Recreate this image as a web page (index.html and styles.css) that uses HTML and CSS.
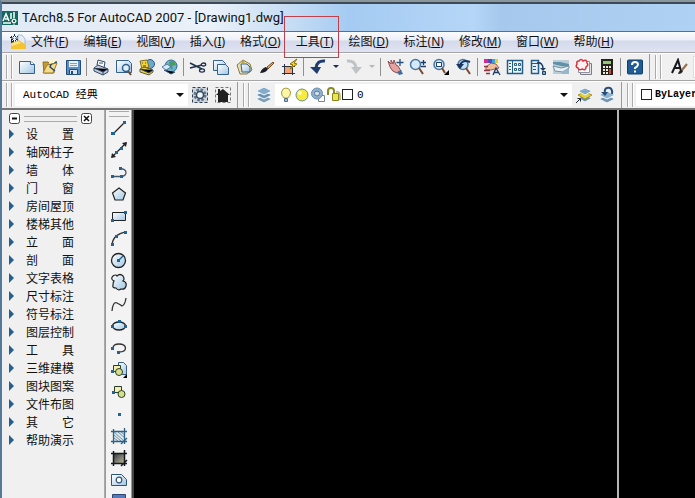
FILE: index.html
```html
<!DOCTYPE html>
<html lang="zh">
<head>
    <meta charset="UTF-8" />
    <title>TArch8.5 For AutoCAD 2007</title>
    <link rel="stylesheet" href="styles.css">
</head>
<body>
    <svg class="defs" width="0" height="0">
        <defs>
            <linearGradient id="paper" x1="0" y1="0" x2="1" y2="1">
                <stop offset="0" stop-color="#fff"/><stop offset="1" stop-color="#9fc6e4"/>
            </linearGradient>
            <linearGradient id="fade" x1="0" y1="0" x2="1" y2="1">
                <stop offset="0" stop-color="#2a3040"/><stop offset="1" stop-color="#c8c49a"/>
            </linearGradient>
        </defs>
    </svg>

    <header class="titlebar">
        <svg class="logo" viewBox="0 0 16 16"><path fill="#12685f" d="M0 1h16v14H0z"/><path fill="none" stroke="#fff" stroke-width="1.5" d="M1 11 4 4l3 7M3 9h3M9 3v6M1 13h8M12 2v6"/><path fill="none" stroke="#cfeee8" d="M9 11h6M12 8v7"/><path fill="#12685f" stroke="#fff" d="M10.5 9.5h3v3h-3z"/></svg>
        <span>TArch8.5 For AutoCAD 2007 - [Drawing1.dwg]</span>
    </header>

    <nav class="menubar">
        <svg class="doc" viewBox="0 0 16 16"><path fill="#172c55" d="M1 2h8v13H1z"/><path fill="#e4edf6" stroke="#8397b0" stroke-width=".6" d="M8 1h4l3 4v6L8 7z"/><path fill="#f3c430" d="M1 9l8-3 7 5v4H1z"/><path fill="#fbe58b" d="M1 10l7-3 3 2-9 3z"/><path stroke="#e8f3ff" d="M1 4h7M4.5 0v8M2 2l5 5M7 2 2 7"/><path stroke="#172c55" d="M0 3.5h2M4.500 0v2"/></svg>
        <a href="#">文件(<u>F</u>)</a>
        <a href="#">编辑(<u>E</u>)</a>
        <a href="#">视图(<u>V</u>)</a>
        <a href="#">插入(<u>I</u>)</a>
        <a href="#">格式(<u>O</u>)</a>
        <a href="#" class="marked">工具(<u>T</u>)</a>
        <a href="#">绘图(<u>D</u>)</a>
        <a href="#">标注(<u>N</u>)</a>
        <a href="#">修改(<u>M</u>)</a>
        <a href="#">窗口(<u>W</u>)</a>
        <a href="#">帮助(<u>H</u>)</a>
    </nav>

    <div class="toolbar">
        <div class="grip"></div>
        <button title="新建"><svg viewBox="0 0 18 18"><path fill="url(#paper)" stroke="#35608c" d="M1.500 3.500h11l4 3v9h-15z"/><path fill="#fff" stroke="#35608c" d="M12.500 3.500v3h4"/></svg></button>
        <button title="打开"><svg viewBox="0 0 18 18"><path fill="#c59a35" stroke="#94701f" d="M2 4h5l2 2h4v9H3z"/><path fill="#f6dc86" stroke="#9b7a2c" d="M2 15 6 7l10-2-4 10z"/><path fill="none" stroke="#23496f" stroke-width="1.500" d="M16 4q-6 0-7 5l5 4"/><path fill="#fff5c4" d="M9 2l7-1-3 4-5 1z"/></svg></button>
        <button title="保存"><svg viewBox="0 0 18 18"><path fill="#5a8fc2" stroke="#214c7c" d="M2.500 2.500h14v14h-14z"/><path fill="#eaf3fb" d="M5 3h9v6H5z"/><path stroke="#7ca3c6" d="M6 5.500h7M6 7.500h7"/><path fill="#d8e3ec" stroke="#214c7c" d="M5.500 11.500h8v5h-8z"/><path fill="#214c7c" d="M7 13h2v3H7z"/></svg></button>
        <span class="sep"></span>
        <button title="打印"><svg viewBox="0 0 18 18"><path fill="#fff" stroke="#33486a" d="M6 2l7 2-1 6-7-3z"/><path fill="#bccbdc" stroke="#33486a" d="M2 10l4-3 10 4v3l-5 3-9-4z"/><path stroke="#33486a" d="M2 10l9 4 5-3M11 14v3M7 5h4"/></svg></button>
        <button title="打印预览"><svg viewBox="0 0 18 18"><path fill="url(#paper)" stroke="#35608c" d="M1.500 2.500h12l3 3v9h-15z"/><circle cx="11" cy="10" r="3.500" fill="#dff0fa" stroke="#33618e" stroke-width="1.500"/><path stroke="#6d4a35" stroke-width="2" d="M13 13l3 4"/></svg></button>
        <button title="发布"><svg viewBox="0 0 18 18"><circle cx="12" cy="6" r="4.500" fill="#69a9d0" stroke="#2c5a86"/><path fill="#f1d33b" stroke="#836b16" d="M2 3l7-1 2 7-7 2z"/><path fill="#f1d33b" stroke="#5f5a3a" d="M2 11l4-2 9 3v2l-4 3-9-3z"/><path stroke="#33486a" d="M4 5h1M7 5h1M5 8h3M2 11l9 4 4-3"/></svg></button>
        <button title="三维 DWF"><svg viewBox="0 0 18 18"><circle cx="10" cy="8" r="6" fill="#6fb2d4" stroke="#2f6895"/><path fill="#4c9a5e" d="M8 4q5-3 7 3l-4 1 1 4-3-2z"/><path fill="#d7e9f6" stroke="#4a7ca8" d="M1 9l5-3 4 3-5 3z"/><path stroke="#2c4f78" d="M3 12l7 4 4-2"/></svg></button>
        <span class="sep"></span>
        <button title="剪切"><svg viewBox="0 0 18 18"><path fill="none" stroke="#1d2f4c" stroke-width="1.500" d="M1 5l12 6M1 10l12-3"/><ellipse cx="14.500" cy="6.500" rx="2.200" ry="1.500" fill="none" stroke="#1d2f4c" stroke-width="1.300"/><ellipse cx="13" cy="12.500" rx="2.500" ry="1.600" fill="none" stroke="#1d2f4c" stroke-width="1.300"/></svg></button>
        <button title="复制"><svg viewBox="0 0 18 18"><path fill="url(#paper)" stroke="#35608c" d="M1.500 2.500h9l3 3v7h-12z"/><path fill="url(#paper)" stroke="#35608c" d="M5.500 6.500h8l3 3v7h-11z"/></svg></button>
        <button title="粘贴"><svg viewBox="0 0 18 18"><path fill="#e9dfb4" stroke="#8a7a3a" d="M2 7l6-5 7 4 2 6-5 4H5z"/><path fill="url(#paper)" stroke="#35608c" d="M6 6h6l3 3v5H7z"/><circle cx="8" cy="4" r="1.500" fill="#c2a23c"/></svg></button>
        <button title="特性匹配"><svg viewBox="0 0 18 18"><path fill="#dba763" stroke="#7c4a1f" d="M9 9l6-5 1 1-6 6z"/><path fill="#1d1d26" d="M2 15q2-5 6-6l2 2q-2 4-8 4z"/></svg></button>
        <button title="块编辑器"><svg viewBox="0 0 18 18"><path fill="#f3a275" stroke="#93401f" d="M3.500 8.500h8v7h-8z"/><path stroke="#29333f" d="M1 8.500h13M1 15.500h13M3.500 6v11M11.500 6v11"/><path fill="#f9d72c" stroke="#8a6c00" d="M16 1 9 6l3 1-3 4 7-5-3-1z"/></svg></button>
        <span class="sep"></span>
        <button title="放弃"><svg viewBox="0 0 18 18"><path fill="none" stroke="#1e3c6c" stroke-width="3" d="M16 3q-8-1-9 7"/><path fill="#1e3c6c" d="M1 9h11l-4 7z"/></svg></button>
        <button class="drop" title="放弃列表"><svg viewBox="0 0 9 18"><path fill="#1e2c50" d="M2 7h6L5 10z"/></svg></button>
        <button title="重做"><svg viewBox="0 0 18 18"><path fill="none" stroke="#bfc3c6" stroke-width="3" d="M2 3q8-1 9 7"/><path fill="#bfc3c6" d="M6 9h11l-6 7z"/></svg></button>
        <button class="drop" title="重做列表"><svg viewBox="0 0 9 18"><path fill="#b4b8bc" d="M2 7h6L5 10z"/></svg></button>
        <span class="sep"></span>
        <button title="实时平移"><svg viewBox="0 0 18 18"><path fill="#e3a3a0" stroke="#8f4f55" d="M2 3l3 3 0-4 2 4 1-4 2 5 2 1 3 5-4 2q-5-1-7-6z"/><path fill="#3d70a1" d="M11 14l4-2 2 4-4 1z"/><path fill="none" stroke="#26527f" stroke-width="1.300" d="M14 1v7M10.500 4.500h7"/></svg></button>
        <button title="实时缩放"><svg viewBox="0 0 18 18"><circle cx="6.500" cy="6.500" r="5" fill="#d5eaf8" stroke="#4779a6" stroke-width="1.500"/><path stroke="#754a34" stroke-width="2" d="M10 10l4 6"/><path stroke="#1b3d68" stroke-width="1.300" d="M14.500 2v5M12 4.500h5M12 8.500h5"/></svg></button>
        <button title="窗口缩放"><svg viewBox="0 0 18 18"><circle cx="7" cy="6.500" r="5" fill="#d5eaf8" stroke="#4779a6" stroke-width="1.500"/><path fill="#fff" stroke="#1b3d68" d="M4.500 4.500h5v4h-5z"/><path stroke="#754a34" stroke-width="2" d="M10 10l3 5"/><path d="M17 12v5h-5z"/></svg></button>
        <button title="缩放上一个"><svg viewBox="0 0 18 18"><circle cx="8" cy="6.500" r="5" fill="#c7e0f3" stroke="#4779a6" stroke-width="1.500"/><path stroke="#754a34" stroke-width="2" d="M11 10l4 6"/><path fill="none" stroke="#18355f" stroke-width="2" d="M15 4Q8 1 5 7"/><path fill="#18355f" d="M1 6h8l-4 5z"/></svg></button>
        <span class="sep"></span>
        <button title="特性"><svg viewBox="0 0 18 18"><path fill="#d72a8c" d="M1 1h4v4H1z"/><path fill="#5245c5" d="M5 1h4v4H5z"/><path fill="#36a7dc" d="M9 1h3v4H9z"/><path fill="#e3d21e" d="M12 1h3v4h-3z"/><path fill="#f0bd9c" stroke="#9a5a54" d="M3 9l5-4 5 1 3 4-4 1-4 1-5 0z"/><path stroke="#893346" stroke-width="1.500" d="M1 8.500h4M1 12.500h6M3 15.500h4"/><path fill="none" stroke="#1f3b68" stroke-width="1.300" d="M10 17l3-7 4 7M11.500 14.500h4"/></svg></button>
        <button title="设计中心"><svg viewBox="0 0 18 18"><path fill="#eff7fb" stroke="#215d84" stroke-width="1.500" d="M1.500 2.500h15v13h-15z"/><path stroke="#215d84" d="M6.500 3v12M3 5.500h2M3 8.500h2M3 11.500h2"/><path fill="none" stroke="#215d84" d="M8.500 5.500h2v2h-2zM12.500 5.500h2v2h-2zM8.500 10.500h2v2h-2zM12.500 10.500h2v2h-2z"/></svg></button>
        <button title="工具选项板"><svg viewBox="0 0 18 18"><path fill="#e5f1f8" stroke="#215d84" stroke-width="1.500" d="M2.500 2.500h7v13h-7z"/><path stroke="#215d84" d="M3 5.500h6M4 8.500h3M4 11.500h3"/><path fill="none" stroke="#1e3e68" stroke-width="1.500" d="M8 5q6-1 6 6"/><path fill="#1e3e68" d="M11 10h6l-3 3z"/><path fill="#7da9c7" stroke="#1e3e68" d="M13.500 13.500h3v3h-3z"/></svg></button>
        <button title="图纸集管理器"><svg viewBox="0 0 18 18"><path fill="#bdcdd7" d="M1 2h16v14H1z"/><path fill="#5f91aa" d="M1 4h7l9 2v3L9 8 1 6z"/><path fill="#e8f1f6" stroke="#7391a6" d="M1 8l8 2 8-2v2l-6 4-8-1z"/><path fill="#96b7c9" d="M12 12l5-1v5H9z"/></svg></button>
        <button title="标记集管理器"><svg viewBox="0 0 18 18"><path fill="#e6e5e6" stroke="#7a7d89" d="M5.500 5.500h11v11h-11z"/><path fill="#fff" stroke="#8e919d" d="M3.500 3.500h11v11h-11z"/><path fill="#fff1f0" stroke="#d53440" stroke-width="1.500" d="M4 3q2-3 4 0 4-2 4 2 2 2-1 4 0 4-4 2-3 2-4-1-3-1-1-4-1-3 2-3z"/></svg></button>
        <button title="快速计算器"><svg viewBox="0 0 18 18"><path fill="#26231d" d="M3 1h12v16H3z"/><path fill="#8fca70" d="M5 3h8v3H5z"/><path fill="#f0ece1" d="M5 8h2v2H5zM8 8h2v2H8zM11 8h2v2h-2zM5 11h2v2H5zM8 11h2v2H8zM5 14h2v2H5zM8 14h2v2H8z"/><path fill="#d64a33" d="M11 11h2v5h-2z"/></svg></button>
        <span class="sep"></span>
        <button title="帮助"><svg viewBox="0 0 18 18"><rect x="1.500" y="2" width="15" height="14" rx="1" fill="#205d94" stroke="#123e6c"/><path fill="none" stroke="#fff" stroke-width="2" d="M6 7q0-3 3-3t3 2.500q0 1.500-3 3.500v1M9 12.500v2"/></svg></button>
        <span class="toolbar-end"></span>
        <div class="grip"></div>
        <button class="style-btn" title="文字样式"><svg viewBox="0 0 18 18"><path fill="none" stroke="#16181d" stroke-width="2" d="M2 15 8 2l3 11M4 10h6"/><path stroke="#9a6a46" stroke-width="2" d="M17 6l-5 6"/><path fill="#222" d="M8 16q1-4 4-4l1 1q-1 3-5 3z"/></svg></button>
        <input class="style-name" type="text" aria-label="文字样式" value="Standard">
    </div>

    <div class="toolbar">
        <div class="grip"></div>
        <div class="combo workspace">
            <select aria-label="工作空间"><option>AutoCAD 经典</option></select>
        </div>
        <button title="工作空间设置"><svg viewBox="0 0 18 18"><path fill="#cdd6df" stroke="#35404c" stroke-dasharray="3 2" d="M1.500 1.500h15v15h-15z"/><circle cx="9" cy="9" r="5" fill="none" stroke="#5d7387" stroke-width="3" stroke-dasharray="2.500 1.400"/><circle cx="9" cy="9" r="3.500" fill="#f2f6f8" stroke="#33485d" stroke-width="1.500"/></svg></button>
        <button title="我的工作空间"><svg viewBox="0 0 18 18"><path fill="none" stroke="#777" stroke-dasharray="3 2" d="M1.500 1.500h15v15h-15z"/><path fill="#202020" d="M4 3h2v2l3-2 7 6h-2v7H4V9H2l2-2z"/></svg></button>
        <span class="toolbar-end"></span>
        <div class="grip"></div>
        <button title="图层特性管理器"><svg viewBox="0 0 18 18"><path fill="#7e9eb8" stroke="#f5f8fa" d="M1 13l8-4 8 4-8 4z"/><path fill="#6b92b4" stroke="#f5f8fa" d="M1 9l8-4 8 4-8 4z"/><path fill="#83abcc" stroke="#f5f8fa" d="M1 5l8-4 8 4-8 4z"/></svg></button>
        <div class="combo layer">
            <svg viewBox="0 0 16 16"><path fill="#fdf6a7" stroke="#a69b3f" d="M6 11Q3 8 3.500 5q1-4 4.500-4t4.500 4q.5 3-2.500 6z"/><path fill="#a1b7ca" stroke="#55728d" d="M6.500 11.500h3v3h-3z"/></svg>
            <svg viewBox="0 0 16 16"><circle cx="8" cy="8" r="6" fill="#f5eb3c" stroke="#6c9096"/><circle cx="6" cy="6" r="2" fill="#fffbc0"/></svg>
            <svg viewBox="0 0 16 16"><path fill="#fff" stroke="#778795" d="M8.500 8.500h6v6h-6z"/><circle cx="7" cy="6.500" r="5.500" fill="#91b0ca" stroke="#6b8faf"/><circle cx="7" cy="6.500" r="2.500" fill="#d2e2ed" stroke="#54789a"/></svg>
            <svg viewBox="0 0 16 16"><path fill="none" stroke="#8c8a22" stroke-width="2" d="M2 8V4q0-3 3-3t3 3v3"/><path fill="#ece64e" stroke="#8a851f" d="M6.500 6.500h6v7h-6z"/><path fill="none" stroke="#8a851f" d="M10 5q4-1 4 3v5"/></svg>
            <i class="swatch"></i>
            <select aria-label="图层"><option>0</option></select>
        </div>
        <button title="将对象的图层置为当前"><svg viewBox="0 0 18 18"><path fill="#6f91ab" stroke="#f5f8fa" d="M3 12l7-3 7 3-7 4z"/><path fill="#e4d137" stroke="#a6962b" d="M3 9l7-3 7 3-7 4z"/><path fill="#82a9c5" stroke="#f5f8fa" d="M3 5l7-3 7 3-7 4z"/><path fill="none" stroke="#202936" d="M1 17l4-4M2.500 12.500h3v3"/></svg></button>
        <button title="上一个图层"><svg viewBox="0 0 18 18"><path fill="#7295b2" stroke="#f5f8fa" d="M1 13l8-4 8 4-8 4z"/><path fill="#91b3cf" stroke="#f5f8fa" d="M1 9l8-4 8 4-8 4z"/><path fill="none" stroke="#264f7b" stroke-width="2" d="M14 8Q15 1 9 2 6 3 7 7"/><path fill="#264f7b" d="M3 6h7l-3 4z"/></svg></button>
        <span class="toolbar-end"></span>
        <div class="grip"></div>
        <div class="combo color">
            <i class="swatch"></i>
            <select aria-label="颜色"><option>ByLayer</option></select>
        </div>
    </div>

    <main>
        <aside class="screen-menu">
            <div class="screen-head">
                <button title="折叠"><svg viewBox="0 0 11 11"><rect x=".5" y=".5" width="10" height="10" rx="2" fill="#fff" stroke="#444"/><path stroke="#111" stroke-width="2" d="M3 5.500h5"/></svg></button>
                <span class="bars"></span>
                <button title="关闭"><svg viewBox="0 0 11 11"><rect x=".5" y=".5" width="10" height="10" rx="2" fill="#fff" stroke="#444"/><path stroke="#111" stroke-width="1.500" d="M3 3l5 5M8 3 3 8"/></svg></button>
            </div>
            <ul>
                <li><a href="#">设　　置</a></li>
                <li><a href="#">轴网柱子</a></li>
                <li><a href="#">墙　　体</a></li>
                <li><a href="#">门　　窗</a></li>
                <li><a href="#">房间屋顶</a></li>
                <li><a href="#">楼梯其他</a></li>
                <li><a href="#">立　　面</a></li>
                <li><a href="#">剖　　面</a></li>
                <li><a href="#">文字表格</a></li>
                <li><a href="#">尺寸标注</a></li>
                <li><a href="#">符号标注</a></li>
                <li><a href="#">图层控制</a></li>
                <li><a href="#">工　　具</a></li>
                <li><a href="#">三维建模</a></li>
                <li><a href="#">图块图案</a></li>
                <li><a href="#">文件布图</a></li>
                <li><a href="#">其　　它</a></li>
                <li><a href="#">帮助演示</a></li>
            </ul>
        </aside>

        <div class="draw-bar">
            <div class="grip-h"></div>
            <button title="直线"><svg viewBox="0 0 18 18"><path stroke="#222" stroke-width="1.300" d="M3 15 15 3"/><path fill="#1e6596" d="M1 13h4v3H1zM13 2h3v3h-3z"/></svg></button>
            <button title="构造线"><svg viewBox="0 0 18 18"><path stroke="#222" stroke-width="1.300" d="M2 16 16 2"/><path fill="#222" d="M1 17l1-5 4 4zM17 1l-5 1 4 4z"/><path fill="#1e6596" d="M5 10h3v3H5zM10 6h3v3h-3z"/></svg></button>
            <button title="多段线"><svg viewBox="0 0 18 18"><path fill="none" stroke="#46576a" stroke-width="1.300" d="M2 13.500h10q4-1 4-4t-5-4"/><path fill="#1e6596" d="M1 12h3v3H1zM10 12h3v3h-3zM9 4h3v3H9z"/></svg></button>
            <button title="正多边形"><svg viewBox="0 0 18 18"><path fill="url(#paper)" stroke="#222" stroke-width="1.200" d="M9 3l6.500 5-2.500 7H5L2.500 8z"/></svg></button>
            <button title="矩形"><svg viewBox="0 0 18 18"><path fill="url(#paper)" stroke="#222" d="M2.500 5.500h13v8h-13z"/><path fill="#1e6596" d="M1 12h3v3H1zM14 4h3v3h-3z"/></svg></button>
            <button title="圆弧"><svg viewBox="0 0 18 18"><path fill="none" stroke="#333" stroke-width="1.300" d="M2 16Q3 5 16 3"/><path fill="#1e6596" d="M1 14h3v3H1zM5 6h3v3H5zM14 2h3v3h-3z"/></svg></button>
            <button title="圆"><svg viewBox="0 0 18 18"><circle cx="8.500" cy="9.500" r="7" fill="url(#paper)" stroke="#222" stroke-width="1.300"/><path stroke="#1e6596" stroke-width="1.500" d="M8 10l5-5"/><path fill="#1e6596" d="M7 8h3v3H7z"/></svg></button>
            <button title="修订云线"><svg viewBox="0 0 18 18"><path fill="url(#paper)" stroke="#222" stroke-width="1.200" d="M4 8Q0 6 3 3q3-2 4 0 3-3 6 0 2 3 0 5 4 1 3 5-1 4-5 3-3 2-5-1-4 0-3-3 0-3 1-4z"/></svg></button>
            <button title="样条曲线"><svg viewBox="0 0 18 18"><path fill="none" stroke="#333" stroke-width="1.300" d="M2 16Q3 6 7 8t5 3q3-1 4-8"/></svg></button>
            <button title="椭圆"><svg viewBox="0 0 18 18"><ellipse cx="9" cy="9" rx="6.500" ry="4" fill="url(#paper)" stroke="#222" stroke-width="1.300"/><path fill="#1e6596" d="M1 8h3v3H1zM14 8h3v3h-3zM8 3h3v3H8z"/></svg></button>
            <button title="椭圆弧"><svg viewBox="0 0 18 18"><path fill="none" stroke="#333" stroke-width="1.300" d="M3 9q0-4 6-4t6.500 4q0 4-6.500 4"/><path fill="#1e6596" d="M1 8h3v3H1zM7 12h3v3H7z"/></svg></button>
            <button title="插入块"><svg viewBox="0 0 18 18"><path fill="url(#paper)" stroke="#35608c" d="M8.500 1.500h5l3 3v9h-8z"/><path fill="#f2efb0" stroke="#2c3d26" d="M3.500 4.500h7v6h-7z"/><circle cx="9" cy="11" r="3.500" fill="#d6e08a" stroke="#2c3d26"/><path fill="#1e6596" d="M1 9h3v3H1z"/><path d="M17 13v4h-4z"/></svg></button>
            <button title="创建块"><svg viewBox="0 0 18 18"><path fill="#f2efb0" stroke="#2c3d26" d="M4.500 3.500h7v6h-7z"/><circle cx="11.500" cy="11" r="3.500" fill="#d6e08a" stroke="#2c3d26"/><path fill="#1e6596" d="M2 8h3v3H2z"/></svg></button>
            <button title="点"><svg viewBox="0 0 18 18"><path fill="#1e6596" d="M8 8h3v3H8z"/></svg></button>
            <button title="图案填充"><svg viewBox="0 0 18 18"><path fill="#dcebf2" d="M4 5h11v9H4z"/><path stroke="#5c7787" stroke-width=".8" d="M4 5l10 9M8 5l7 6M11 5l4 3M4 8l7 6M4 11l4 3"/><path stroke="#2c6286" stroke-width="1.300" d="M1 4.500h16M1 14.500h16M3.500 2v15M14.500 1v16M11 17l6-6"/></svg></button>
            <button title="渐变色"><svg viewBox="0 0 18 18"><path fill="url(#fade)" d="M3 4h12v11H3z"/><path stroke="#15191f" stroke-width="1.500" d="M1 4.500h16M1 14.500h16M3.500 2v15M14.500 1v16M11 17l6-6"/></svg></button>
            <button title="面域"><svg viewBox="0 0 18 18"><path fill="url(#paper)" stroke="#2f5579" d="M1.500 3.500h10l5 5v6h-15z"/><circle cx="9" cy="9" r="2.800" fill="#fff" stroke="#2f5579" stroke-width="1.200"/></svg></button>
            <button title="表格"><svg viewBox="0 0 18 18"><path fill="#5679b8" stroke="#2b4576" d="M2.500 1.500h13v15h-13z"/></svg></button>
        </div>

        <section class="canvas">
            <div class="viewport"></div>
            <div class="viewport side"></div>
        </section>
    </main>
</body>
</html>
```
FILE: styles.css
```css
* {
    box-sizing: border-box;
}
body {
    display: flex;
    flex-direction: column;
    height: 100vh;
    margin: 0;
    overflow: hidden;
    border-top: 2px solid #8b959c;
    border-left: 2px solid #55799b;
    background-color: #f0f0f0;
    color: #111;
    font-family: "Noto Sans", "Noto Sans CJK SC", sans-serif;
    font-size: 12px;
}
a {
    color: inherit;
    text-decoration: none;
}
button {
    display: flex;
    flex: none;
    align-items: center;
    justify-content: center;
    width: 23px;
    height: 22px;
    padding: 0;
    border: none;
    background: none;
}
button svg {
    width: 18px;
    height: 18px;
}
.defs {
    position: absolute;
}

/* title + menu */
.titlebar {
    display: flex;
    flex: none;
    align-items: center;
    gap: 4px;
    height: 30px;
    border-top: 2px solid #3c4a58;
    border-bottom: 1px solid #5d6f80;
    background: linear-gradient(90deg, #dfeaf5 0, #eaf1f9 30%, #c5dcf4 42%, #a5cbf2 50%, #b5d6f7 68%, #a5c8ec 72%, #aed1f4 100%);
    font-family: Roboto, sans-serif;
    font-size: 13px;
    white-space: nowrap;
}
.logo {
    width: 16px;
    height: 16px;
}
.menubar {
    display: flex;
    flex: none;
    align-items: center;
    gap: 15px;
    height: 20px;
    padding-left: 8px;
    background: linear-gradient(#fbfcfe 0, #eceff8 40%, #d5daeb 45%, #dfe3f2 100%);
    white-space: nowrap;
}
.menubar .doc {
    flex: none;
    width: 16px;
    height: 16px;
    margin-right: -10px;
}
.menubar a {
    line-height: 18px;
}
.marked {
    position: relative;
}
.marked::after {
    content: "";
    position: absolute;
    top: -17px;
    left: -12px;
    right: -5px;
    height: 40px;
    border: 1px solid #c0404c;
}

/* toolbars */
.toolbar {
    display: flex;
    flex: none;
    align-items: center;
    height: 28px;
    padding-left: 4px;
    overflow: hidden;
    border-top: 1px solid #a5a5a5;
    background-color: #f0f0f0;
    box-shadow: inset 0 1px #fff;
}
.grip {
    flex: none;
    width: 6px;
    height: 24px;
    margin-right: 3px;
    border: solid #aaa;
    border-width: 0 1px;
    box-shadow: 1px 0 #fff, inset 1px 0 #fff;
}
.sep {
    flex: none;
    width: 1px;
    height: 18px;
    margin: 0 2px;
    background-color: #8f8f8f;
}
.drop {
    width: 13px;
}
.drop svg {
    width: 9px;
}
.toolbar-end {
    flex: none;
    width: 1px;
    height: 26px;
    margin: 0 5px 0 3px;
    background-color: #999;
}
.style-btn {
    margin: 0 3px;
}
.style-name {
    width: 140px;
    height: 22px;
    border: 1px solid #ddd;
    background-color: #fff;
    font: 11px "Liberation Mono", monospace;
}
.combo {
    display: flex;
    flex: none;
    align-items: center;
    height: 22px;
    background-color: #fff;
}
.combo svg {
    width: 16px;
    height: 16px;
}
.combo select {
    flex: 1;
    min-width: 0;
    height: 22px;
    padding: 0 0 0 4px;
    border: none;
    appearance: none;
    background: none;
    color: #000;
    font: 11px "Liberation Mono", "Noto Sans CJK SC", monospace;
}
.combo::after {
    content: "";
    margin-right: 4px;
    border: 4px solid transparent;
    border-top-color: #111;
    border-bottom: none;
}
.workspace {
    width: 173px;
    padding-left: 4px;
}
.layer {
    width: 297px;
    padding-left: 3px;
}
.color {
    width: 180px;
    padding-left: 5px;
}
.combo.color select {
    padding-left: 3px;
    font-size: 10px;
    font-weight: bold;
}
.swatch {
    width: 11px;
    height: 11px;
    border: 1px solid #222;
}

/* work area */
main {
    display: flex;
    flex: 1;
    min-height: 0;
    border-top: 2px solid #777;
}
.screen-menu {
    flex: none;
    width: 103px;
    padding: 3px 0 0 7px;
    border-right: 1px solid #aaa;
    background-color: #f0f0f0;
}
.screen-head {
    display: flex;
    align-items: center;
    gap: 4px;
    width: 83px;
    height: 11px;
}
.screen-head button,
.screen-head svg {
    width: 11px;
    height: 11px;
}
.bars {
    flex: 1;
    height: 6px;
    border: solid #aaa;
    border-width: 1px 0;
}
.screen-menu ul {
    margin: 1px 0 0;
    padding: 0;
    list-style: none;
}
.screen-menu li {
    display: flex;
    align-items: center;
    gap: 12px;
    height: 18px;
    white-space: nowrap;
}
.screen-menu li::before {
    content: "";
    border: 5px solid transparent;
    border-left-color: #23608f;
    border-right: none;
}
.draw-bar {
    display: flex;
    flex: none;
    flex-direction: column;
    align-items: center;
    width: 27px;
    overflow: hidden;
    border: solid #999;
    border-width: 0 1px;
    background-color: #f3f3f3;
}
.grip-h {
    flex: none;
    width: 20px;
    height: 6px;
    margin: 1px 0 0;
    border: solid #aaa;
    border-width: 1px 0;
}
.canvas {
    display: flex;
    flex: 1;
    border-left: 2px solid #444;
    background-color: #000;
}
.viewport {
    flex: 1;
}
.side {
    flex: none;
    width: 78px;
    border-left: 2px solid #b5b5b5;
}
```
